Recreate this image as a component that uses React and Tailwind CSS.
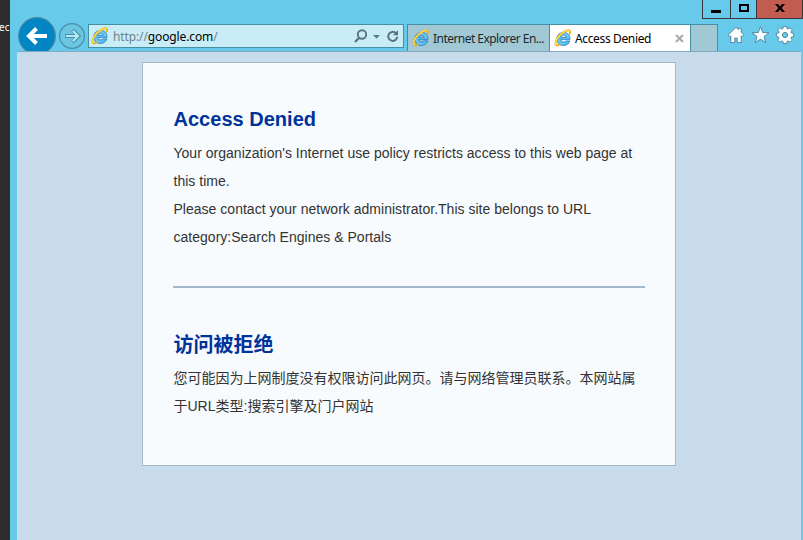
function IELogo() {
  return (
    <svg className="h-[18px] w-[18px] shrink-0" viewBox="0 0 18 18" fill="none">
      <path d="M16 10.600H6.800c.2 1.500 1.300 2.300 2.900 2.300 1.200 0 2-.4 2.500-1h3.600c-.9 2.900-3.200 4.600-6.300 4.600-4 0-6.700-2.600-6.700-6.500s2.800-6.600 6.700-6.600c4.100 0 6.600 2.800 6.500 7.200ZM6.800 8.300h5.400C12 7 11 6.200 9.600 6.200S7.100 7 6.800 8.300Z" fill="#58bcec" stroke="#2a82c2" strokeWidth=".8" />
      <path d="M4.800 8.600c.5-2.500 2.300-3.900 4.800-3.900 2.400 0 4.300 1.500 4.700 4.300M4.700 10.700c.3 2.500 2.200 4.200 4.800 4.200" stroke="#96dbf8" strokeWidth=".8" />
      <path d="M5.500 15.400c-1.400.9-2.700 1.200-3.400.6C.3 14.300 2.800 9 6.500 5.500c3.600-3.300 7.900-5.100 9.100-3.800.6.600.6 1.700.1 3" stroke="#e9b023" strokeWidth="1.900" strokeLinecap="round" />
      <path d="M2.100 15.600C.6 14 2.900 9 6.500 5.500c3.600-3.300 7.900-5.100 9.100-3.800" stroke="#ffdc3c" strokeWidth="1.200" strokeLinecap="round" />
    </svg>
  );
}

function WindowButtons() {
  return (
    <div className="flex h-[19px] w-[101px] border-b border-l border-[#39363a]">
      <div className="flex w-[28px] items-center justify-center border-r border-[#39363a]">
        <svg width="12" height="12" className="-ml-px"><path d="M1 7h10v3H1z" fill="#000" /></svg>
      </div>
      <div className="flex w-[26px] items-center justify-center border-r border-[#39363a]">
        <svg width="12" height="10" className="-mt-[3px]"><path d="M2 2h8v6H2z" fill="none" stroke="#000" strokeWidth="2" /></svg>
      </div>
      <div className="flex flex-1 items-center justify-center border-r border-[#39363a] bg-[#c25b50]">
        <svg width="10" height="8" className="-mt-[3px]"><path d="M0 0h3l2 2.500L7 0h3L6.700 4 10 8H7L5 5.500 3 8H0l3.300-4Z" fill="#000" /></svg>
      </div>
    </div>
  );
}

function NavButtons() {
  return (
    <svg width="70" height="34" viewBox="18 17 70 34" className="-mt-[7px] shrink-0">
      <circle cx="37" cy="36" r="18.300" fill="#0285c3" stroke="#4686a0" strokeWidth="1.200" />
      <path d="M47 36H30M36.500 28.500 29 36l7.500 7.500" fill="none" stroke="#fff" strokeWidth="4" />
      <circle cx="72" cy="36" r="12.400" fill="#6ac6e2" stroke="#478ea8" strokeWidth="1.200" />
      <path d="M65 36h12.500M72.500 30l6 6-6 6" fill="none" stroke="#478ea8" strokeWidth="3.800" />
      <path d="M65.800 36h12M72.800 30.800l5.200 5.200-5.200 5.200" fill="none" stroke="#b5e7f5" strokeWidth="2.200" />
    </svg>
  );
}

function AddressBar() {
  return (
    <div className="flex h-6 w-[316px] shrink-0 items-center border border-[#458fa5] bg-[#c9edf7] pl-[2px] text-[12px]">
      <IELogo />
      <span className="ml-[4px] flex-1 pt-[2px] tracking-[-0.12px] whitespace-nowrap text-[#6f8288]">http://<span className="text-black">google.com</span>/</span>
      <svg width="49" height="20" viewBox="354 26 49 20" fill="none" className="shrink-0">
        <circle cx="362" cy="34.500" r="4.200" stroke="#58747c" strokeWidth="1.900" />
        <path d="m359 38-4 4" stroke="#58747c" strokeWidth="2.300" />
        <path d="M373 35h7l-3.500 3.500Z" fill="#58747c" />
        <path d="M395.900 33.200a4.500 4.500 0 1 0 1.300 3.500" stroke="#58747c" strokeWidth="2" />
        <path d="M398 30v5.200h-5Z" fill="#58747c" />
      </svg>
    </div>
  );
}

function Tabs() {
  return (
    <div className="ml-[3px] flex h-[27px] shrink-0 border-t border-l border-[#458fa5] text-[12px] text-black">
      <div className="flex w-[142px] items-center border-r border-[#458fa5] bg-[#a1c8d5] pl-[4px] text-[#1c292d]">
        <IELogo />
        <span className="ml-[3px] pt-[2px] tracking-[-0.54px] whitespace-nowrap">Internet Explorer En...</span>
      </div>
      <div className="flex w-[141px] items-center border-r border-[#458fa5] bg-white pl-[4px]">
        <IELogo />
        <span className="ml-[3px] flex-1 pt-[2px] tracking-[-0.36px] whitespace-nowrap">Access Denied</span>
        <svg width="9" height="9" className="mr-[6px]"><path d="m1 1 7 7m0-7L1 8" stroke="#aaa" strokeWidth="2" /></svg>
      </div>
      <div className="w-[27px] border-r border-[#458fa5] bg-[#a1c8d5]" />
    </div>
  );
}

function ToolIcons() {
  return (
    <svg width="68" height="20" viewBox="727 26 68 20" className="mt-[2px] ml-[9px] shrink-0" fill="#fff" stroke="#478098" strokeWidth=".9" strokeLinejoin="round">
      <path d="m736 27.300 2.300 2.200v-1.200h3v4.100l2.500 2.500-1.700 1.900-.9-.8v6.600h-4v-4.500h-2.400v4.500h-4v-6.600l-.9.8-1.700-1.900Z" />
      <path d="m760.500 26.700 2.200 5.800 6.200.2-4.900 3.800 1.700 6.100-5.200-3.500-5.200 3.500 1.700-6.100-4.900-3.800 6.200-.2Z" />
      <path fillRule="evenodd" d="m783.300 27h3.400l.3 2.200 1.100.5 1.900-1.400 2.300 2.300-1.400 1.900.5 1.100 2.200.3v3.400l-2.200.3-.5 1.100 1.400 1.900-2.300 2.300-1.900-1.400-1.100.5-.3 2.200h-3.400l-.3-2.200-1.100-.5-1.900 1.400-2.300-2.300 1.400-1.900-.5-1.100-2.200-.3v-3.400l2.200-.3.5-1.100-1.400-1.900 2.300-2.300 1.900 1.400 1.100-.5ZM785 33a2.600 2.600 0 1 0 0 5.200 2.600 2.600 0 1 0 0-5.200Z" transform="translate(0 -.6)" />
    </svg>
  );
}

export default function App() {
  return (
    <div className="flex h-[540px] w-[803px] overflow-hidden bg-[#67caea] font-['Noto_Sans',sans-serif]">
      <div className="w-[10px] shrink-0 overflow-hidden bg-[#2d2d2d] pt-[20px] text-[10px] leading-[15px] text-white">
        <span className="-ml-px block">ec</span>
      </div>
      <div className="flex flex-1 flex-col pl-[7px]">
        <div className="flex h-6 justify-end">
          <WindowButtons />
        </div>
        <div className="flex h-[27px] items-start pl-px">
          <NavButtons />
          <AddressBar />
          <Tabs />
          <ToolIcons />
        </div>
        <main className="mr-[2px] flex flex-1 items-start border-t border-[#83a8c2] bg-[#c8dbeb] pt-[10px] pl-[125px]">
          <article className="h-[404px] w-[534px] border border-[#a5b9ca] bg-[#f7fbfe] px-[30px] pt-[42px] font-['Liberation_Sans','Noto_Sans_CJK_SC',sans-serif] text-[14px] leading-[28px] text-[#333]">
            <section className="h-[181px] pl-[0.5px] tracking-[0.018px]">
              <h1 className="mb-[6px] text-[20px] leading-[28px] font-bold text-[#039]">Access Denied</h1>
              <p>Your organization's Internet use policy restricts access to this web page at<br />this time.</p>
              <p>Please contact your network administrator.This site belongs to URL<br />category:Search Engines &amp; Portals</p>
            </section>
            <hr className="border-t-2 border-[#a5b9ca]" />
            <section className="pt-[43px] pl-[0.5px]" lang="zh-CN">
              <h2 className="mb-[5px] text-[20px] leading-[28px] font-bold text-[#039]">访问被拒绝</h2>
              <p className="whitespace-nowrap">您可能因为上网制度没有权限访问此网页。请与网络管理员联系。本网站属<br />于URL类型:搜索引擎及门户网站</p>
            </section>
          </article>
        </main>
      </div>
    </div>
  );
}
